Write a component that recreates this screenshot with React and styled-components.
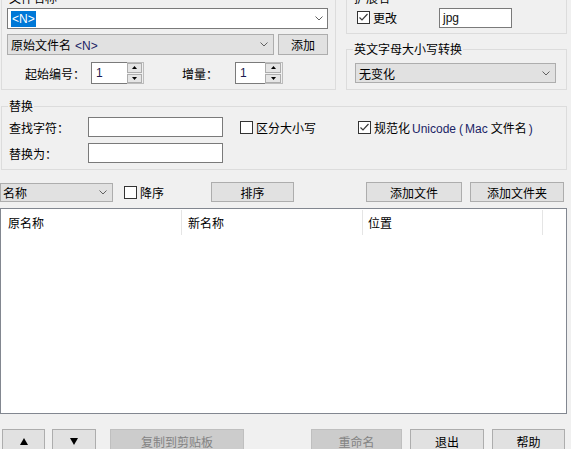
import React from 'react';
import styled, { createGlobalStyle } from 'styled-components';

const GlobalStyle = createGlobalStyle`
  html, body {
    margin: 0;
    padding: 0;
    background: #f0f0f0;
  }
  body {
    font-family: "Noto Sans CJK SC", "Microsoft YaHei", sans-serif;
    font-size: 12px;
    color: #000;
  }
  * {
    box-sizing: border-box;
  }
`;

const Window = styled.div`
  width: 571px;
  height: 449px;
  overflow: hidden;
  background: #f0f0f0;
  padding-right: 4px;
  display: flex;
  flex-direction: column;
`;

const TopArea = styled.div`
  display: grid;
  grid-template-columns: 335px 221px;
  column-gap: 10px;
  margin: -2px 0 0 1px;
  flex: none;
`;

const Group = styled.div`
  position: relative;
  border: 1px solid #dcdcdc;
  height: ${p => p.$h}px;
  padding: ${p => p.$pad || '0'};
  margin-top: ${p => p.$mt || 0}px;
  margin-left: ${p => p.$ml || 0}px;
  flex: none;
`;

const GroupTitle = styled.span`
  position: absolute;
  top: -8px;
  left: 6px;
  padding: 0 1px;
  background: #f0f0f0;
  line-height: 14px;
  font-size: 12px;
  white-space: nowrap;
`;

const Row = styled.div`
  display: flex;
  align-items: ${p => p.$align || 'center'};
  margin-top: ${p => p.$mt || 0}px;
  padding-left: ${p => p.$pl || 0}px;
`;

const Latin = styled.span`
  font-family: "Liberation Sans", Arial, sans-serif;
  font-size: 12px;
  color: ${p => p.$c || '#1b2466'};
  margin: ${p => p.$m || '0'};
`;

const EditCombo = styled.div`
  width: ${p => p.$w}px;
  height: ${p => p.$h || 21}px;
  background: #fff;
  border: 1px solid #7a7a7a;
  display: flex;
  align-items: center;
  padding: 0 4px 0 3px;
`;

const Selected = styled.span`
  background: #0078d7;
  color: #fff;
  font-family: "Liberation Sans", Arial, sans-serif;
  font-size: 12px;
  line-height: 16px;
  padding: 0 1px;
`;

const ListCombo = styled.div`
  width: ${p => p.$w}px;
  height: ${p => p.$h || 21}px;
  background: #e1e1e1;
  border: 1px solid #adadad;
  display: flex;
  align-items: center;
  padding: 0 5px 0 ${p => p.$pl ?? 3}px;
  white-space: nowrap;
  flex: none;
`;

const ChevronWrap = styled.span`
  margin-left: auto;
  display: flex;
  align-items: center;
`;

const Button = styled.div`
  width: ${p => p.$w}px;
  height: ${p => p.$h || 21}px;
  margin-left: ${p => p.$ml || 0}px;
  margin-right: ${p => p.$mr || 0}px;
  background: ${p => (p.$disabled ? '#cccccc' : '#e1e1e1')};
  border: 1px solid ${p => (p.$disabled ? '#bfbfbf' : '#adadad')};
  color: ${p => (p.$disabled ? '#838383' : '#000')};
  display: flex;
  align-items: center;
  justify-content: center;
  flex: none;
  white-space: nowrap;
`;

const Label = styled.span`
  width: ${p => p.$w}px;
  margin-left: ${p => p.$ml || 0}px;
  flex: none;
  white-space: nowrap;
`;

const Spin = styled.div`
  display: flex;
  height: 22px;
  flex: none;
`;

const SpinInput = styled.div`
  width: ${p => p.$w}px;
  height: 22px;
  background: #fff;
  border: 1px solid #7a7a7a;
  border-right: none;
  display: flex;
  align-items: center;
  padding-left: 4px;
`;

const SpinButtons = styled.div`
  width: ${p => p.$w}px;
  height: 22px;
  border: 1px solid #bcbcbc;
  border-left: none;
  display: flex;
  flex-direction: column;
  gap: 1px;
  padding: 0 1px 0 0;
  background: #f0f0f0;
`;

const SpinBtn = styled.div`
  flex: 1;
  background: #e5e5e5;
  border: 1px solid #adadad;
  display: flex;
  align-items: center;
  justify-content: center;
`;

const TextBox = styled.div`
  width: ${p => p.$w}px;
  height: 20px;
  background: #fff;
  border: 1px solid #7a7a7a;
  margin-left: ${p => p.$ml || 0}px;
  display: flex;
  align-items: center;
  padding-left: 3px;
  flex: none;
`;

const CheckLabel = styled.label`
  display: flex;
  align-items: center;
  gap: 3px;
  width: ${p => (p.$w ? `${p.$w}px` : 'auto')};
  margin-left: ${p => p.$ml || 0}px;
  margin-top: ${p => p.$mt || 0}px;
  flex: none;
  white-space: nowrap;
`;

const CheckText = styled.span`
  white-space: nowrap;
`;

const Box = styled.span`
  width: 13px;
  height: 13px;
  border: 1px solid #333;
  background: #fff;
  display: inline-flex;
  align-items: center;
  justify-content: center;
  flex: none;
`;

const RightColumn = styled.div`
  display: flex;
  flex-direction: column;
`;

const Toolbar = styled.div`
  display: flex;
  align-items: center;
  height: 20px;
  margin-top: 12px;
  flex: none;
`;

const Spacer = styled.div`
  flex: 1;
`;

const List = styled.div`
  margin-top: 6px;
  height: 206px;
  background: #fff;
  border: 1px solid #828790;
  flex: none;
`;

const ListHeader = styled.div`
  display: flex;
  height: 26px;
`;

const HeaderCell = styled.div`
  width: ${p => p.$w}px;
  border-right: 1px solid #e5e5e5;
  padding-left: ${p => p.$pl || 6}px;
  display: flex;
  align-items: center;
  margin-top: 1px;
`;

const BottomBar = styled.div`
  display: flex;
  margin-top: 15px;
  padding-left: 2px;
  flex: none;
`;

const Chevron = () => (
  <ChevronWrap>
    <svg width="8" height="5" viewBox="0 0 8 5">
      <polyline points="0.5,0.5 4,4 7.5,0.5" fill="none" stroke="#606060" strokeWidth="1" />
    </svg>
  </ChevronWrap>
);

const Tri = ({ up, w = 5, h = 3 }) => (
  <svg width={w} height={h} viewBox={`0 0 ${w} ${h}`}>
    <polygon points={up ? `0,${h} ${w / 2},0 ${w},${h}` : `0,0 ${w / 2},${h} ${w},0`} fill="#000" />
  </svg>
);

const CheckBox = ({ checked }) => (
  <Box>
    {checked && (
      <svg width="11" height="11" viewBox="0 0 11 11">
        <polyline points="1.5,5.5 4,8 9.5,2" fill="none" stroke="#3a3a3a" strokeWidth="1.2" />
      </svg>
    )}
  </Box>
);

const SpinBox = ({ value, inputWidth, btnWidth }) => (
  <Spin>
    <SpinInput $w={inputWidth}>
      <Latin $c="#1a1a50">{value}</Latin>
    </SpinInput>
    <SpinButtons $w={btnWidth}>
      <SpinBtn><Tri up /></SpinBtn>
      <SpinBtn><Tri /></SpinBtn>
    </SpinButtons>
  </Spin>
);

export default function App() {
  return (
    <>
      <GlobalStyle />
      <Window>
        <TopArea>
          <Group $h={92} $pad="9px 7px 0 5px">
            <GroupTitle>文件名称</GroupTitle>
            <EditCombo $w={321}>
              <Selected>&lt;N&gt;</Selected>
              <Chevron />
            </EditCombo>
            <Row $mt={5}>
              <ListCombo $w={267}>
                <span>
                  原始文件名<Latin $m="0 0 0 4px">&lt;N&gt;</Latin>
                </span>
                <Chevron />
              </ListCombo>
              <Button $w={50} $ml={4}>添加</Button>
            </Row>
            <Row $mt={7} $pl={18}>
              <Label $w={66}>起始编号：</Label>
              <SpinBox value="1" inputWidth={36} btnWidth={17} />
              <Label $w={53} $ml={38}>增量：</Label>
              <SpinBox value="1" inputWidth={30} btnWidth={18} />
            </Row>
          </Group>

          <RightColumn>
            <Group $h={36} $pad="9px 0 0 10px">
              <GroupTitle>扩展名</GroupTitle>
              <Row $align="flex-start">
                <CheckLabel $w={82} $mt={1}>
                  <CheckBox checked />
                  <CheckText>更改</CheckText>
                </CheckLabel>
                <TextBox $w={73}>
                  <Latin $c="#111">jpg</Latin>
                </TextBox>
              </Row>
            </Group>
            <Group $h={41} $mt={15} $pad="13px 0 0 8px">
              <GroupTitle>英文字母大小写转换</GroupTitle>
              <ListCombo $w={201} $h={20}>
                <span>无变化</span>
                <Chevron />
              </ListCombo>
            </Group>
          </RightColumn>
        </TopArea>

        <Group $h={64} $mt={16} $ml={1} $pad="10px 0 0 7px">
          <GroupTitle>替换</GroupTitle>
          <Row>
            <Label $w={79}>查找字符：</Label>
            <TextBox $w={135} />
            <CheckLabel $w={118} $ml={17}>
              <CheckBox />
              <CheckText>区分大小写</CheckText>
            </CheckLabel>
            <CheckLabel>
              <CheckBox checked />
              <CheckText>
                规范化<Latin $m="0 0 0 2px">Unicode</Latin>
                <Latin $m="0 2px 0 3px">(</Latin>
                <Latin $m="0 3px 0 0">Mac</Latin>文件名<Latin $m="0 0 0 2px">)</Latin>
              </CheckText>
            </CheckLabel>
          </Row>
          <Row $mt={6}>
            <Label $w={79}>替换为：</Label>
            <TextBox $w={135} />
          </Row>
        </Group>

        <Toolbar>
          <ListCombo $w={113} $h={19} $pl={2}>
            <span>名称</span>
            <Chevron />
          </ListCombo>
          <CheckLabel $w={87} $ml={11}>
            <CheckBox />
            <CheckText>降序</CheckText>
          </CheckLabel>
          <Button $w={83} $h={20}>排序</Button>
          <Spacer />
          <Button $w={96} $h={20}>添加文件</Button>
          <Button $w={94} $h={20} $ml={8} $mr={3}>添加文件夹</Button>
        </Toolbar>

        <List>
          <ListHeader>
            <HeaderCell $w={181} $pl={7}>原名称</HeaderCell>
            <HeaderCell $w={181}>新名称</HeaderCell>
            <HeaderCell $w={180} $pl={5}>位置</HeaderCell>
          </ListHeader>
        </List>

        <BottomBar>
          <Button $w={43} $h={25}><Tri up w={8} h={7} /></Button>
          <Button $w={44} $h={25} $ml={7}><Tri w={8} h={7} /></Button>
          <Button $w={134} $h={25} $ml={14} $disabled>复制到剪贴板</Button>
          <Spacer />
          <Button $w={91} $h={25} $disabled>重命名</Button>
          <Button $w={74} $h={25} $ml={8}>退出</Button>
          <Button $w={73} $h={25} $ml={8} $mr={2}>帮助</Button>
        </BottomBar>
      </Window>
    </>
  );
}
